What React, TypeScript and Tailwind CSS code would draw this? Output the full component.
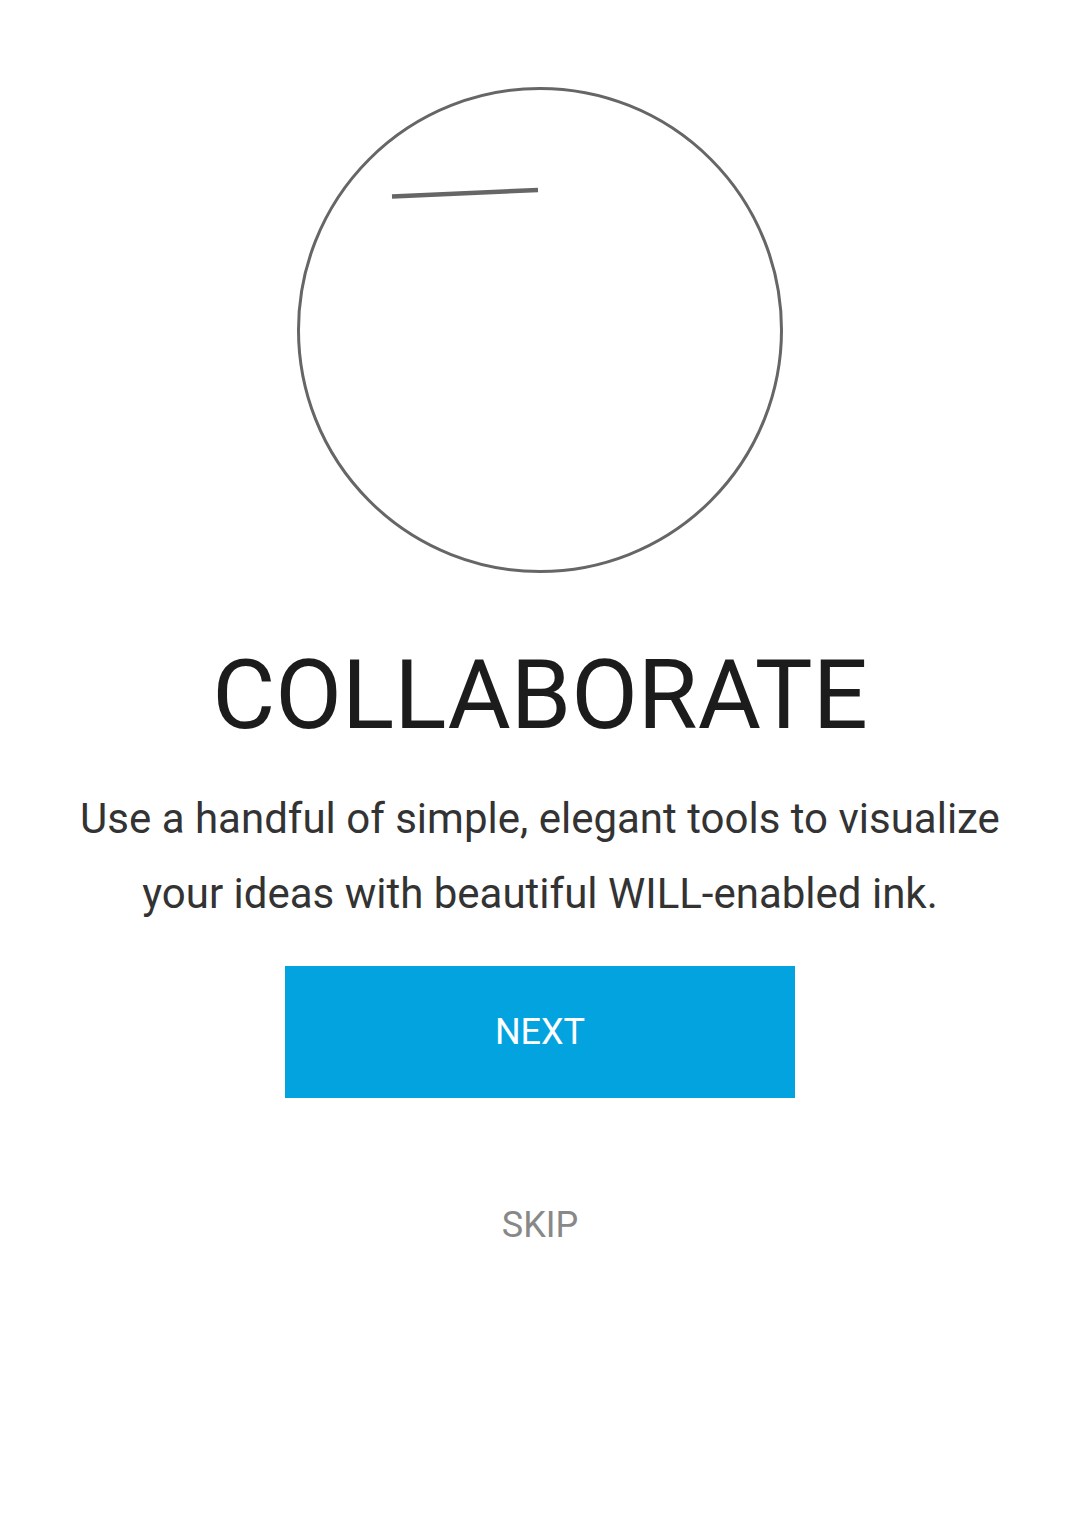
import React from 'react';

const Sketch: React.FC = () => (
  <svg width="490" height="490" viewBox="0 0 490 490" fill="none">
    <circle cx="245" cy="245" r="241.5" stroke="#666666" strokeWidth="3" />
    <path d="M97 111.5 L243 105" stroke="#666666" strokeWidth="4.5" strokeLinecap="butt" />
  </svg>
);

const App: React.FC = () => {
  return (
    <div className="w-[1080px] h-[1533px] bg-white flex flex-col items-center pt-[85px] font-['Roboto',sans-serif]">
      <Sketch />
      <h1 className="mt-[72px] text-[97px] leading-none font-normal text-[#1c1c1c]">COLLABORATE</h1>
      <p className="mt-[37px] text-[42px] leading-[75px] text-[#333333] text-center">
        Use a handful of simple, elegant tools to visualize
        <br />
        your ideas with beautiful WILL-enabled ink.
      </p>
      <button className="mt-[35px] w-[510px] h-[132px] bg-[#03a3e0] text-white text-[36px] leading-none flex items-center justify-center">
        NEXT
      </button>
      <button className="mt-[109px] text-[36px] leading-none text-[#888888]">SKIP</button>
    </div>
  );
};

export default App;
